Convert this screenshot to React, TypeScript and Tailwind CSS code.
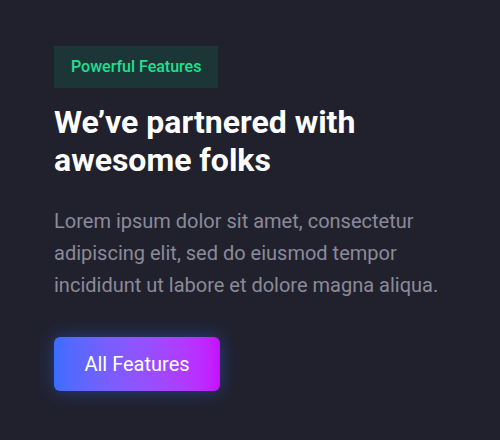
export default function App() {
  return (
    <div className="min-h-[440px] w-[500px] bg-[#21212e] pl-[54px] pr-[40px] pt-[46px] font-['Roboto',sans-serif]">
      <div className="flex flex-col items-start">
        <span className="flex h-[42px] items-center bg-[#1c3638] px-[17px] text-[16px] font-medium text-[#1fe08f]">
          Powerful Features
        </span>
        <h1 className="mt-[15px] text-[32px] font-bold leading-[38px] text-white">
          We’ve partnered with awesome folks
        </h1>
        <p className="mt-[26px] text-[20px] leading-[32px] text-[#8b8a98]">
          Lorem ipsum dolor sit amet, consectetur adipiscing elit, sed do eiusmod tempor incididunt ut labore et dolore magna aliqua.
        </p>
        <button className="mt-[36px] flex h-[54px] w-[166px] items-center justify-center rounded-md bg-gradient-to-r from-[#3a6dff] to-[#c60cff] text-[20px] text-white shadow-[0_0_18px_rgba(50,110,255,0.4)]">
          All Features
        </button>
      </div>
    </div>
  );
}
